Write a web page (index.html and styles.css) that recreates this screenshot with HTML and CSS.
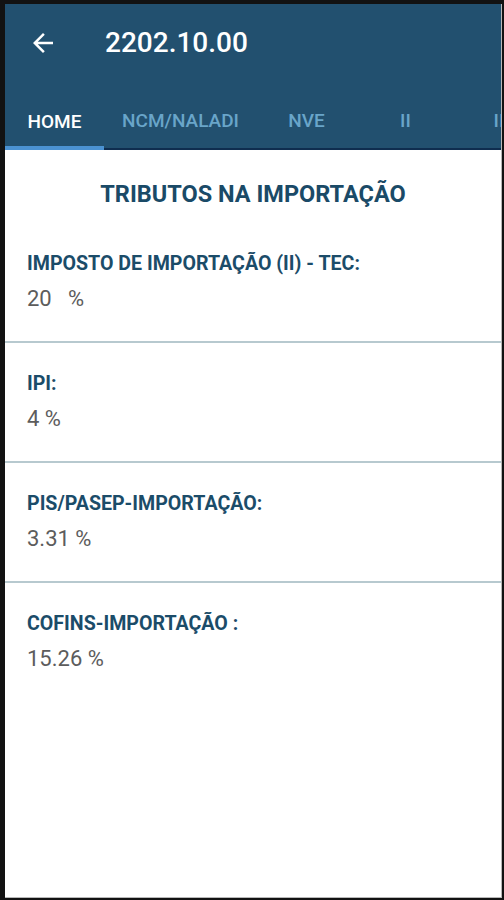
FILE: index.html
```html
<!DOCTYPE html>
<html lang="pt">
<head>
<meta charset="utf-8">
<title>2202.10.00</title>
<link rel="stylesheet" href="styles.css">
</head>
<body>
<div class="screen">
  <header class="appbar">
    <div class="toolbar">
      <svg class="back" viewBox="0 0 24 24" width="30" height="30"><path d="M20 11H7.83l5.59-5.59L12 4l-8 8 8 8 1.41-1.41L7.83 13H20v-2z" fill="#ffffff"/></svg>
      <h1 class="title">2202.10.00</h1>
    </div>
    <nav class="tabs">
      <div class="tab active">HOME</div>
      <div class="tab">NCM/NALADI</div>
      <div class="tab">NVE</div>
      <div class="tab">II</div>
      <div class="tab tab-edge">II</div>
    </nav>
  </header>
  <main class="content">
    <h2 class="heading">TRIBUTOS NA IMPORTAÇÃO</h2>
    <section class="item">
      <div class="label">IMPOSTO DE IMPORTAÇÃO (II) - TEC:</div>
      <div class="value">20&nbsp;&nbsp; %</div>
    </section>
    <section class="item">
      <div class="label">IPI:</div>
      <div class="value">4 %</div>
    </section>
    <section class="item">
      <div class="label">PIS/PASEP-IMPORTAÇÃO:</div>
      <div class="value">3.31 %</div>
    </section>
    <section class="item">
      <div class="label">COFINS-IMPORTAÇÃO :</div>
      <div class="value">15.26 %</div>
    </section>
  </main>
</div>
</body>
</html>
```

FILE: styles.css
```css
html, body {
  margin: 0;
  padding: 0;
}
body {
  background: #121212;
  font-family: Roboto, "Liberation Sans", sans-serif;
  width: 504px;
  height: 900px;
  overflow: hidden;
}
.screen {
  margin: 4px 2px 0 5px;
  height: 893px;
  background: #ffffff;
  border-right: 1px solid #b8b8b8;
  border-bottom: 1px solid #b8b8b8;
  display: flex;
  flex-direction: column;
  overflow: hidden;
}
.appbar {
  background: #22506f;
  flex: none;
}
.toolbar {
  height: 84px;
  display: flex;
  align-items: center;
  padding-bottom: 6px;
  box-sizing: border-box;
}
.back {
  margin-left: 23px;
  flex: none;
}
.title {
  margin: 0 0 0 47px;
  color: #ffffff;
  font-size: 28px;
  font-weight: 500;
  line-height: 32px;
}
.tabs {
  height: 62px;
  display: flex;
  border-bottom: 2px solid #0f2d4f;
  box-sizing: border-box;
  white-space: nowrap;
}
.tab {
  flex: none;
  min-width: 99px;
  padding: 0 18px;
  box-sizing: border-box;
  display: flex;
  align-items: center;
  justify-content: center;
  font-size: 19px;
  font-weight: 500;
  color: #69a5c9;
  padding-top: 4px;
}
.tab.tab-edge {
  min-width: 88px;
}
.tab.active {
  color: #ffffff;
  box-shadow: inset 0 -4px 0 #4b92d2;
  margin-bottom: -2px;
}
.content {
  flex: 1;
  padding-left: 22px;
}
.heading {
  margin: 0 0 0 -22px;
  padding: 30px 0 15px;
  text-align: center;
  font-size: 23.5px;
  line-height: 28px;
  font-weight: 700;
  color: #1a4a67;
}
.item {
  margin-left: -22px;
  padding: 29px 0 29px 22px;
  border-bottom: 2px solid #b7c9cf;
}
.label {
  font-size: 19.6px;
  line-height: 24px;
  font-weight: 700;
  color: #1b4c69;
}
.value {
  margin-top: 10px;
  font-size: 22px;
  line-height: 26px;
  color: #5c5c5c;
}
.item:last-child {
  border-bottom: none;
}
```
